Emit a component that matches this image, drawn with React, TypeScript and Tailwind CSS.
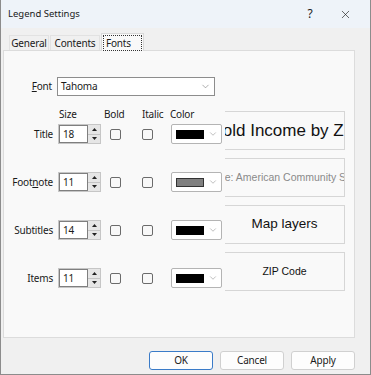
import { ChevronDown, X } from "lucide-react";

type Row = {
  label: string;
  ul?: number; // index of the underlined access key
  size: string;
  swatch: string;
  preview: string;
  pcls: string;
};

const ROWS: Row[] = [
  {
    label: "Title",
    size: "18",
    swatch: "bg-black border-black",
    preview: "Household Income by ZIP Code",
    pcls: "text-[17px] text-[#111]",
  },
  {
    label: "Footnote",
    ul: 4,
    size: "11",
    swatch: "bg-[#808080] border-[#333]",
    preview: "Source: American Community Survey",
    pcls: "text-[10.5px] text-[#8a8a8a]",
  },
  {
    label: "Subtitles",
    size: "14",
    swatch: "bg-black border-black",
    preview: "Map layers",
    pcls: "text-[13.5px] text-[#111]",
  },
  {
    label: "Items",
    size: "11",
    swatch: "bg-black border-black",
    preview: "ZIP Code",
    pcls: "text-[10.5px] text-[#111]",
  },
];

export default function App() {
  return (
    <div className="w-[371px] h-[375px] overflow-hidden bg-[#f0f0f0] border-x border-b border-[#8c8c8c] font-['Noto_Sans',sans-serif] text-[10px] tracking-[-0.2px] text-[#1a1a1a] flex flex-col">
      {/* title bar */}
      <div className="h-[28px] shrink-0 bg-[#eef3f9] flex items-center pl-[7px] tracking-normal">
        <span className="flex-1 text-[9.5px]">Legend Settings</span>
        <span className="w-[20px] text-center text-[12px]">?</span>
        <span className="w-[50px] flex justify-center">
          <X size={13} strokeWidth={1.2} />
        </span>
      </div>

      {/* tabs */}
      <div className="h-[22px] shrink-0 flex items-end pl-[8px] relative z-10">
        <Tab w="w-[40px]">General</Tab>
        <Tab w="w-[50px]">Contents</Tab>
        <div className="w-[43px] h-[18px] -mb-px px-[1px] pt-[1px] bg-[#f9f9f9] border border-b-0 border-[#d9d9d9]">
          <span className="block h-[16px] leading-[14px] px-[2px] border border-dotted border-[#333]">Fonts</span>
        </div>
      </div>

      {/* panel */}
      <div className="ml-[2px] w-[352px] h-[288px] shrink-0 bg-[#f9f9f9] border border-[#dcdcdc]">
        {/* font picker */}
        <div className="flex items-center mt-[26px]">
          <span className="w-[48px] text-right">
            <span className="underline">F</span>ont
          </span>
          <div className="ml-[5px] w-[158px] h-[19px] bg-white border border-[#8d8d8d] flex items-center pl-[3px] pr-[3px]">
            <span className="flex-1">Tahoma</span>
            <ChevronDown size={11} strokeWidth={1.3} className="text-[#777]" />
          </div>
        </div>

        <div className="flex mt-[11px]">
          {/* left: header + controls */}
          <div className="w-[221px] flex flex-col">
            <div className="h-[14px] leading-[14px] flex">
              <span className="w-[55px]" />
              <span className="w-[45px]">Size</span>
              <span className="w-[38px]">Bold</span>
              <span className="w-[28px]">Italic</span>
              <span>Color</span>
            </div>
            <div className="mt-[3px] flex flex-col gap-[28px]">
              {ROWS.map((r) => (
                <div key={r.label} className="h-[20px] flex items-center">
                  <span className="w-[49px] text-right">
                    {r.ul === undefined ? (
                      r.label
                    ) : (
                      <>
                        {r.label.slice(0, r.ul)}
                        <span className="underline">{r.label[r.ul]}</span>
                        {r.label.slice(r.ul + 1)}
                      </>
                    )}
                  </span>
                  <Spinner value={r.size} />
                  <Check className="ml-[9px]" />
                  <Check className="ml-[21px]" />
                  <div className="ml-[18px] w-[51px] h-[20px] bg-white border border-[#b4b4b4] rounded-[2px] flex items-center pl-[4px] pr-[3px]">
                    <span className={`w-[28px] h-[9px] border ${r.swatch}`} />
                    <span className="flex-1" />
                    <ChevronDown size={10} strokeWidth={1.3} className="text-[#888]" />
                  </div>
                </div>
              ))}
            </div>
          </div>

          {/* right: previews */}
          <div className="mt-[4px] flex flex-col gap-[8px]">
            {ROWS.map((r) => (
              <div
                key={r.label}
                className="w-[120px] h-[39px] overflow-hidden flex items-center justify-center border-t border-r border-b border-[#d6d6d6] bg-[#f9f9f9] font-['Liberation_Sans',sans-serif] tracking-normal"
              >
                <span className={`whitespace-nowrap ${r.pcls}`}>{r.preview}</span>
              </div>
            ))}
          </div>
        </div>
      </div>

      {/* buttons */}
      <div className="flex justify-end gap-[7px] pr-[15px] mt-[13px]">
        <Btn primary>OK</Btn>
        <Btn>Cancel</Btn>
        <Btn>Apply</Btn>
      </div>
    </div>
  );
}

function Tab({ children, w }: { children: React.ReactNode; w: string }) {
  return (
    <div className={`${w} h-[15px] leading-[14px] text-center mr-[1px] bg-[#f0f0f0] border border-b-0 border-[#e2e2e2]`}>
      {children}
    </div>
  );
}

function Spinner({ value }: { value: string }) {
  return (
    <div className="ml-[5px] w-[43px] h-[20px] flex border border-[#c6c6c6] bg-[#e8e8e8]">
      <div className="w-[29px] bg-white border border-[#7f7f7f] pl-[3px] leading-[16px]">{value}</div>
      <div className="flex-1 flex flex-col">
        <div className="flex-1 flex items-center justify-center border-b border-[#c4c4c4] bg-[#e6e6e6]">
          <svg width="5" height="3" viewBox="0 0 5 3"><path d="M2.5 0L5 3H0z" fill="#222" /></svg>
        </div>
        <div className="flex-1 flex items-center justify-center bg-[#e6e6e6]">
          <svg width="5" height="3" viewBox="0 0 5 3"><path d="M0 0h5L2.5 3z" fill="#222" /></svg>
        </div>
      </div>
    </div>
  );
}

function Check({ className }: { className: string }) {
  return <span className={`${className} w-[11px] h-[11px] rounded-[2px] border border-[#6b6b6b] bg-[#f8f8f8]`} />;
}

function Btn({ children, primary }: { children: React.ReactNode; primary?: boolean }) {
  return (
    <div
      className={`w-[64px] h-[19px] rounded-[3px] bg-[#fdfdfd] flex items-center justify-center border ${
        primary ? "border-[#3a7bc8]" : "border-[#d0d0d0]"
      }`}
    >
      {children}
    </div>
  );
}
